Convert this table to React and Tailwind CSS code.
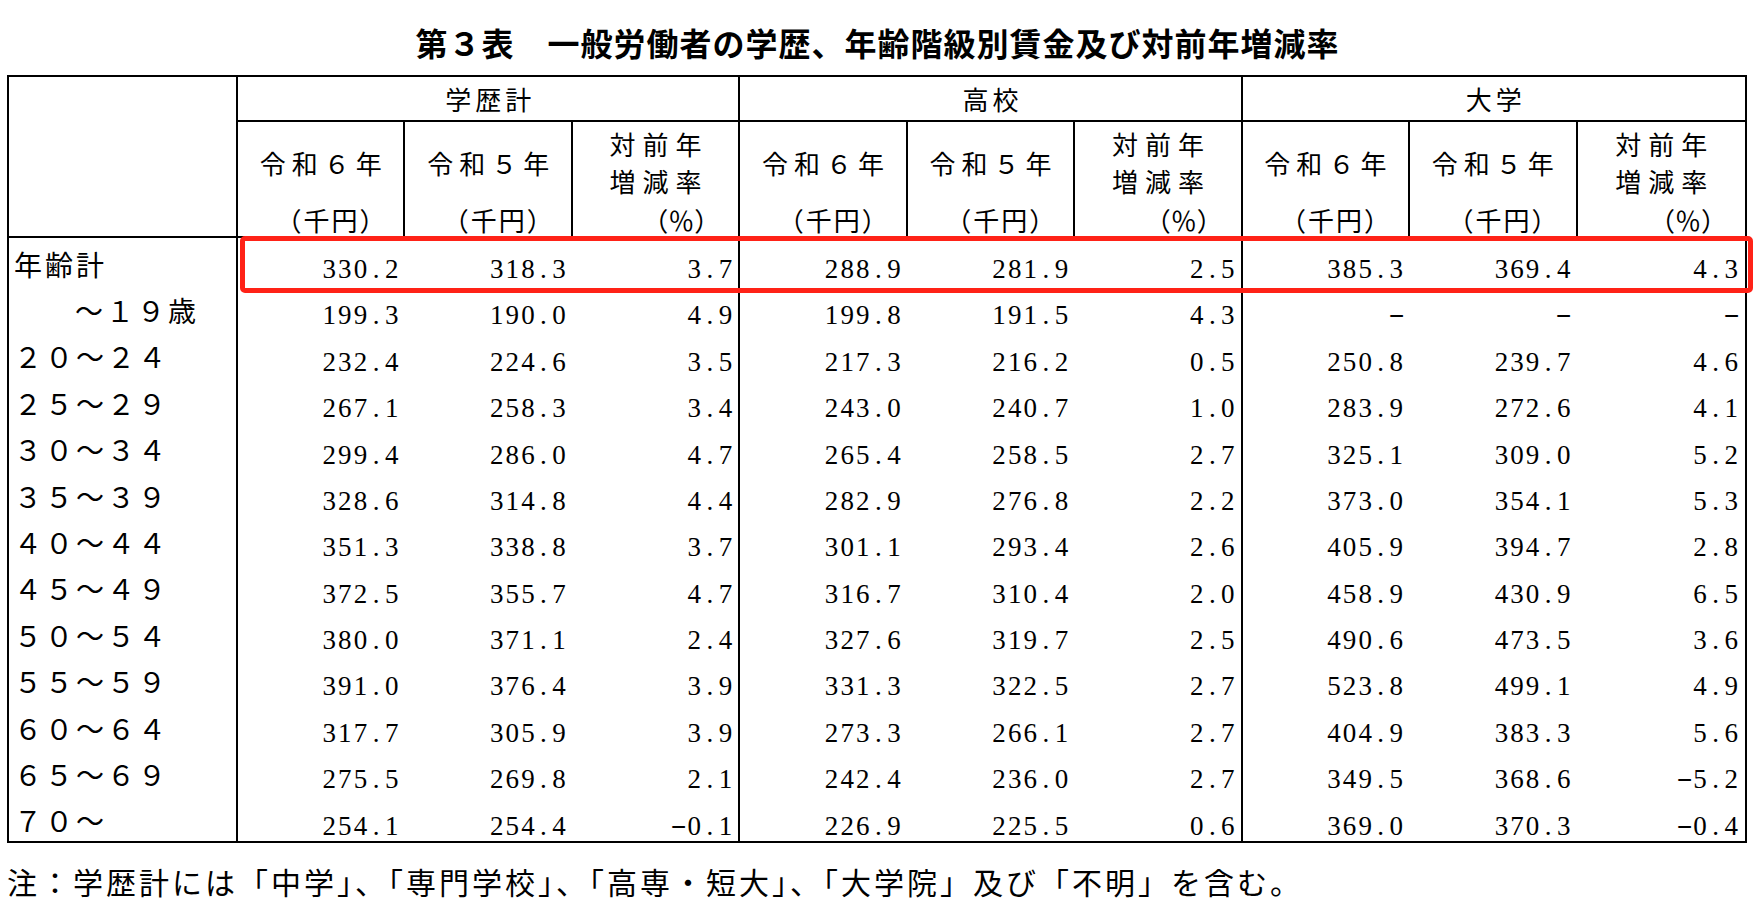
import React from "react";

const groups = ["学歴計", "高校", "大学"];

const rows = [
  ["年齢計", "330.2", "318.3", "3.7", "288.9", "281.9", "2.5", "385.3", "369.4", "4.3"],
  ["～１９歳", "199.3", "190.0", "4.9", "199.8", "191.5", "4.3", "-", "-", "-"],
  ["２０～２４", "232.4", "224.6", "3.5", "217.3", "216.2", "0.5", "250.8", "239.7", "4.6"],
  ["２５～２９", "267.1", "258.3", "3.4", "243.0", "240.7", "1.0", "283.9", "272.6", "4.1"],
  ["３０～３４", "299.4", "286.0", "4.7", "265.4", "258.5", "2.7", "325.1", "309.0", "5.2"],
  ["３５～３９", "328.6", "314.8", "4.4", "282.9", "276.8", "2.2", "373.0", "354.1", "5.3"],
  ["４０～４４", "351.3", "338.8", "3.7", "301.1", "293.4", "2.6", "405.9", "394.7", "2.8"],
  ["４５～４９", "372.5", "355.7", "4.7", "316.7", "310.4", "2.0", "458.9", "430.9", "6.5"],
  ["５０～５４", "380.0", "371.1", "2.4", "327.6", "319.7", "2.5", "490.6", "473.5", "3.6"],
  ["５５～５９", "391.0", "376.4", "3.9", "331.3", "322.5", "2.7", "523.8", "499.1", "4.9"],
  ["６０～６４", "317.7", "305.9", "3.9", "273.3", "266.1", "2.7", "404.9", "383.3", "5.6"],
  ["６５～６９", "275.5", "269.8", "2.1", "242.4", "236.0", "2.7", "349.5", "368.6", "-5.2"],
  ["７０～", "254.1", "254.4", "-0.1", "226.9", "225.5", "0.6", "369.0", "370.3", "-0.4"],
];

const Num = ({ v }) => (
  <span className="inline-flex">
    {v.split("").map((ch, i) =>
      ch === "-" ? (
        <span key={i} className="inline-block w-[15.6px] text-center">
          <span className="inline-block scale-x-[1.8] -translate-y-[2px]">-</span>
        </span>
      ) : (
        <span key={i} className="inline-block w-[15.6px] text-center">
          {ch}
        </span>
      )
    )}
  </span>
);

const YearHead = ({ n, last }) => (
  <div className={`h-[116px] border-b-2 border-black flex flex-col ${last ? "" : "border-r-2"}`}>
    <div className="h-[80px] flex items-center justify-center text-[26px] tracking-[6px] pl-[6px]">
      令和{n}年
    </div>
    <div className="h-[34px] flex items-center justify-end pr-[16px] text-[26px] tracking-[2px]">
      （千円）
    </div>
  </div>
);

const RateHead = ({ last }) => (
  <div className={`h-[116px] border-b-2 border-black flex flex-col ${last ? "" : "border-r-2"}`}>
    <div className="h-[80px] flex flex-col items-center justify-center text-[26px] leading-[37px] tracking-[7px] pl-[7px]">
      <span>対前年</span>
      <span>増減率</span>
    </div>
    <div className="h-[34px] flex items-center justify-end pr-[18px] text-[26px]">
      （％）
    </div>
  </div>
);

export default function App() {
  return (
    <div className="relative w-[1755px] h-[903px] bg-white text-black font-['Noto_Sans_CJK_JP',sans-serif]">
      <div className="h-[75px] pt-[9px] flex items-center justify-center text-[32px] font-bold tracking-[1px]">
        第３表　一般労働者の学歴、年齢階級別賃金及び対前年増減率
      </div>

      <div className="ml-[7px] w-[1740px] border-2 border-black grid grid-cols-[229px_repeat(9,minmax(0,1fr))]">
        <div className="row-span-2 border-r-2 border-b-2 border-black"></div>
        {groups.map((g, i) => (
          <div
            key={g}
            className={`col-span-3 h-[45px] border-b-2 border-black flex items-center justify-center text-[26px] tracking-[4px] pl-[4px] ${
              i < 2 ? "border-r-2" : ""
            }`}
          >
            {g}
          </div>
        ))}
        {groups.map((g, i) => (
          <React.Fragment key={g}>
            <YearHead n="６" />
            <YearHead n="５" />
            <RateHead last={i === 2} />
          </React.Fragment>
        ))}

        {rows.map((r) => (
          <React.Fragment key={r[0]}>
            <div
              className={`h-[46.4px] border-r-2 border-black flex items-center pt-[5px] text-[28px] tracking-[3px] ${
                r[0] === "～１９歳" ? "pl-[66px]" : "pl-[5px]"
              }`}
            >
              {r[0]}
            </div>
            {r.slice(1).map((v, j) => (
              <div
                key={j}
                className={`h-[46.4px] flex items-center justify-end pt-[16px] [font-family:'Liberation_Serif',serif] text-[27px] ${
                  j === 2 || j === 5 ? "border-r-2 border-black pr-[5px]" : "pr-[6px]"
                }`}
              >
                <Num v={v} />
              </div>
            ))}
          </React.Fragment>
        ))}
      </div>

      <div className="pl-[7px] mt-[18px] text-[30px] leading-[40px] tracking-[3px]">
        注：学歴計には「中学」、「専門学校」、「高専・短大」、「大学院」及び「不明」を含む。
      </div>

      <div className="absolute left-[240px] top-[236px] w-[1513px] h-[57px] border-[5px] border-[#ff2217] rounded-[5px]"></div>
    </div>
  );
}
